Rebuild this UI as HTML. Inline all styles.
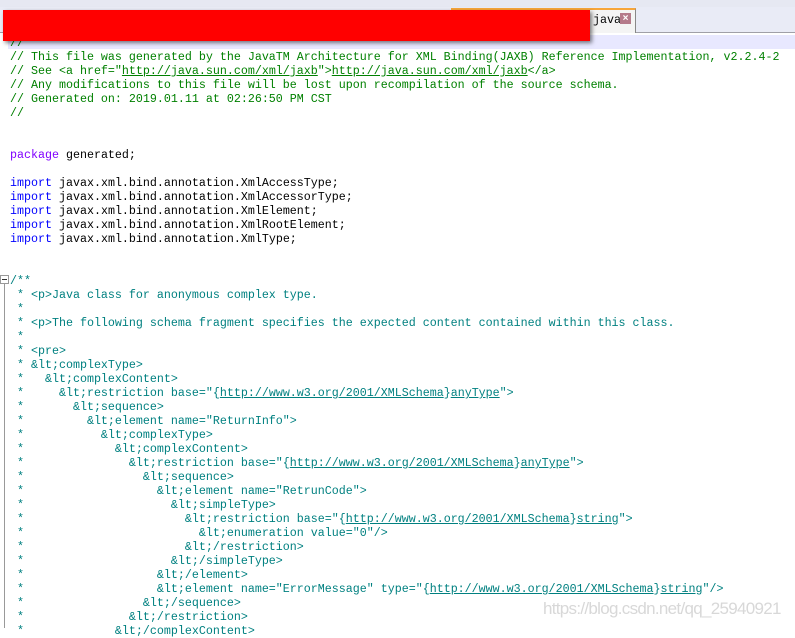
<!DOCTYPE html>
<html><head><style>
body{margin:0;width:795px;height:628px;overflow:hidden;background:#fff;position:relative;font-family:"Liberation Mono",monospace;}
.top{position:absolute;left:0;top:0;width:795px;height:7px;background:#e6e8f2;border-bottom:1px solid #c8cad8}
.tabs{position:absolute;left:0;top:7px;width:795px;height:25px;background:#e9ebf6;border-bottom:1px solid #a0a0a8}
.tab{position:absolute;left:451px;top:8px;width:184px;height:23px;background:#f4f4f4;border-top:2px solid #f7a53a;border-right:1px solid #888}
.tabt{position:absolute;left:593px;top:13px;font-size:11.7px;color:#000}
.x{position:absolute;left:620px;top:13px;width:11px;height:11px;background:#b57a8a;color:#fff;font:bold 10px "Liberation Sans",sans-serif;text-align:center;line-height:11px}
.red{position:absolute;left:3px;top:10px;width:587px;height:31px;background:#f00;box-shadow:2px 2px 4px rgba(0,0,0,.5)}
.hl{position:absolute;left:8px;top:35px;width:787px;height:14px;background:#e8e8ff}
pre{position:absolute;left:10px;top:36px;margin:0;font-size:11.67px;line-height:14px;color:#000;font-family:"Liberation Mono",monospace}
.c{color:#008000}.d{color:#008080}.k{color:#8000ff}.i{color:#0000ff}
u{text-decoration:underline}
.gut{position:absolute;left:4px;top:283px;width:1px;height:345px;background:#999}
.fold{position:absolute;left:0px;top:275px;width:7px;height:7px;border:1px solid #999;background:#fff}
.fold:after{content:"";position:absolute;left:1px;top:3px;width:5px;height:1px;background:#333}
.wm{position:absolute;left:543px;top:599px;font:17px "Liberation Sans",sans-serif;letter-spacing:-0.7px;color:#d8d8d8;white-space:nowrap}
</style></head><body>
<div class="top"></div><div class="tabs"></div>
<div class="tab"></div><div class="tabt">java</div><div class="x">×</div>
<div class="hl"></div>
<div class="gut"></div><div class="fold"></div>
<pre><span class="c">//
// This file was generated by the JavaTM Architecture for XML Binding(JAXB) Reference Implementation, v2.2.4-2
// See &lt;a href="<u>http://java.sun.com/xml/jaxb</u>"&gt;<u>http://java.sun.com/xml/jaxb</u>&lt;/a&gt;
// Any modifications to this file will be lost upon recompilation of the source schema.
// Generated on: 2019.01.11 at 02:26:50 PM CST
//</span>


<span class="k">package</span> generated;

<span class="i">import</span> javax.xml.bind.annotation.XmlAccessType;
<span class="i">import</span> javax.xml.bind.annotation.XmlAccessorType;
<span class="i">import</span> javax.xml.bind.annotation.XmlElement;
<span class="i">import</span> javax.xml.bind.annotation.XmlRootElement;
<span class="i">import</span> javax.xml.bind.annotation.XmlType;


<span class="d">/**
 * &lt;p&gt;Java class for anonymous complex type.
 *
 * &lt;p&gt;The following schema fragment specifies the expected content contained within this class.
 *
 * &lt;pre&gt;
 * &amp;lt;complexType&gt;
 *   &amp;lt;complexContent&gt;
 *     &amp;lt;restriction base="{<u>http://www.w3.org/2001/XMLSchema</u>}<u>anyType</u>"&gt;
 *       &amp;lt;sequence&gt;
 *         &amp;lt;element name="ReturnInfo"&gt;
 *           &amp;lt;complexType&gt;
 *             &amp;lt;complexContent&gt;
 *               &amp;lt;restriction base="{<u>http://www.w3.org/2001/XMLSchema</u>}<u>anyType</u>"&gt;
 *                 &amp;lt;sequence&gt;
 *                   &amp;lt;element name="RetrunCode"&gt;
 *                     &amp;lt;simpleType&gt;
 *                       &amp;lt;restriction base="{<u>http://www.w3.org/2001/XMLSchema</u>}<u>string</u>"&gt;
 *                         &amp;lt;enumeration value="0"/&gt;
 *                       &amp;lt;/restriction&gt;
 *                     &amp;lt;/simpleType&gt;
 *                   &amp;lt;/element&gt;
 *                   &amp;lt;element name="ErrorMessage" type="{<u>http://www.w3.org/2001/XMLSchema</u>}<u>string</u>"/&gt;
 *                 &amp;lt;/sequence&gt;
 *               &amp;lt;/restriction&gt;
 *             &amp;lt;/complexContent&gt;</span></pre>
<div class="red"></div>
<div class="wm">https://blog.csdn.net/qq_25940921</div>
</body></html>
